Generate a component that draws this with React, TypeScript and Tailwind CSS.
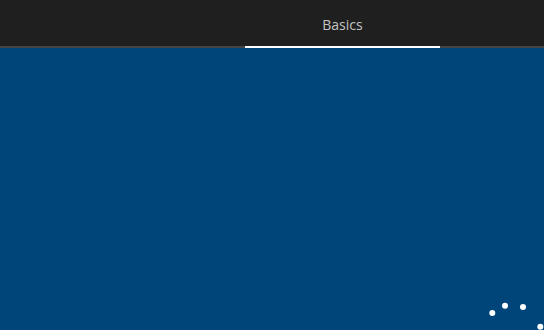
export default function App() {
  return (
    <div className="relative w-[544px] h-[330px] flex flex-col bg-[#00457a] overflow-hidden" style={{ fontFamily: '"Open Sans", "Noto Sans", sans-serif' }}>
      <div className="h-[48px] shrink-0 bg-[#1f1f1f] border-b-2 border-[#454545] flex">
        <div className="w-[245px]" />
        <div className="w-[195px] -mb-[2px] border-b-2 border-white flex items-center justify-center pt-[3px]">
          <span className="text-[14px] text-[#c4c4c4]">Basics</span>
        </div>
      </div>
      <div className="flex-1 bg-[#00457a]" />
      <svg className="absolute left-0 top-0" width="544" height="330" viewBox="0 0 544 330">
        <circle cx="492.3" cy="313" r="3" fill="#fff" />
        <circle cx="505" cy="305.7" r="3" fill="#fff" />
        <circle cx="523" cy="307" r="3" fill="#fff" />
        <circle cx="540.3" cy="326.7" r="3" fill="#fff" />
      </svg>
    </div>
  );
}
